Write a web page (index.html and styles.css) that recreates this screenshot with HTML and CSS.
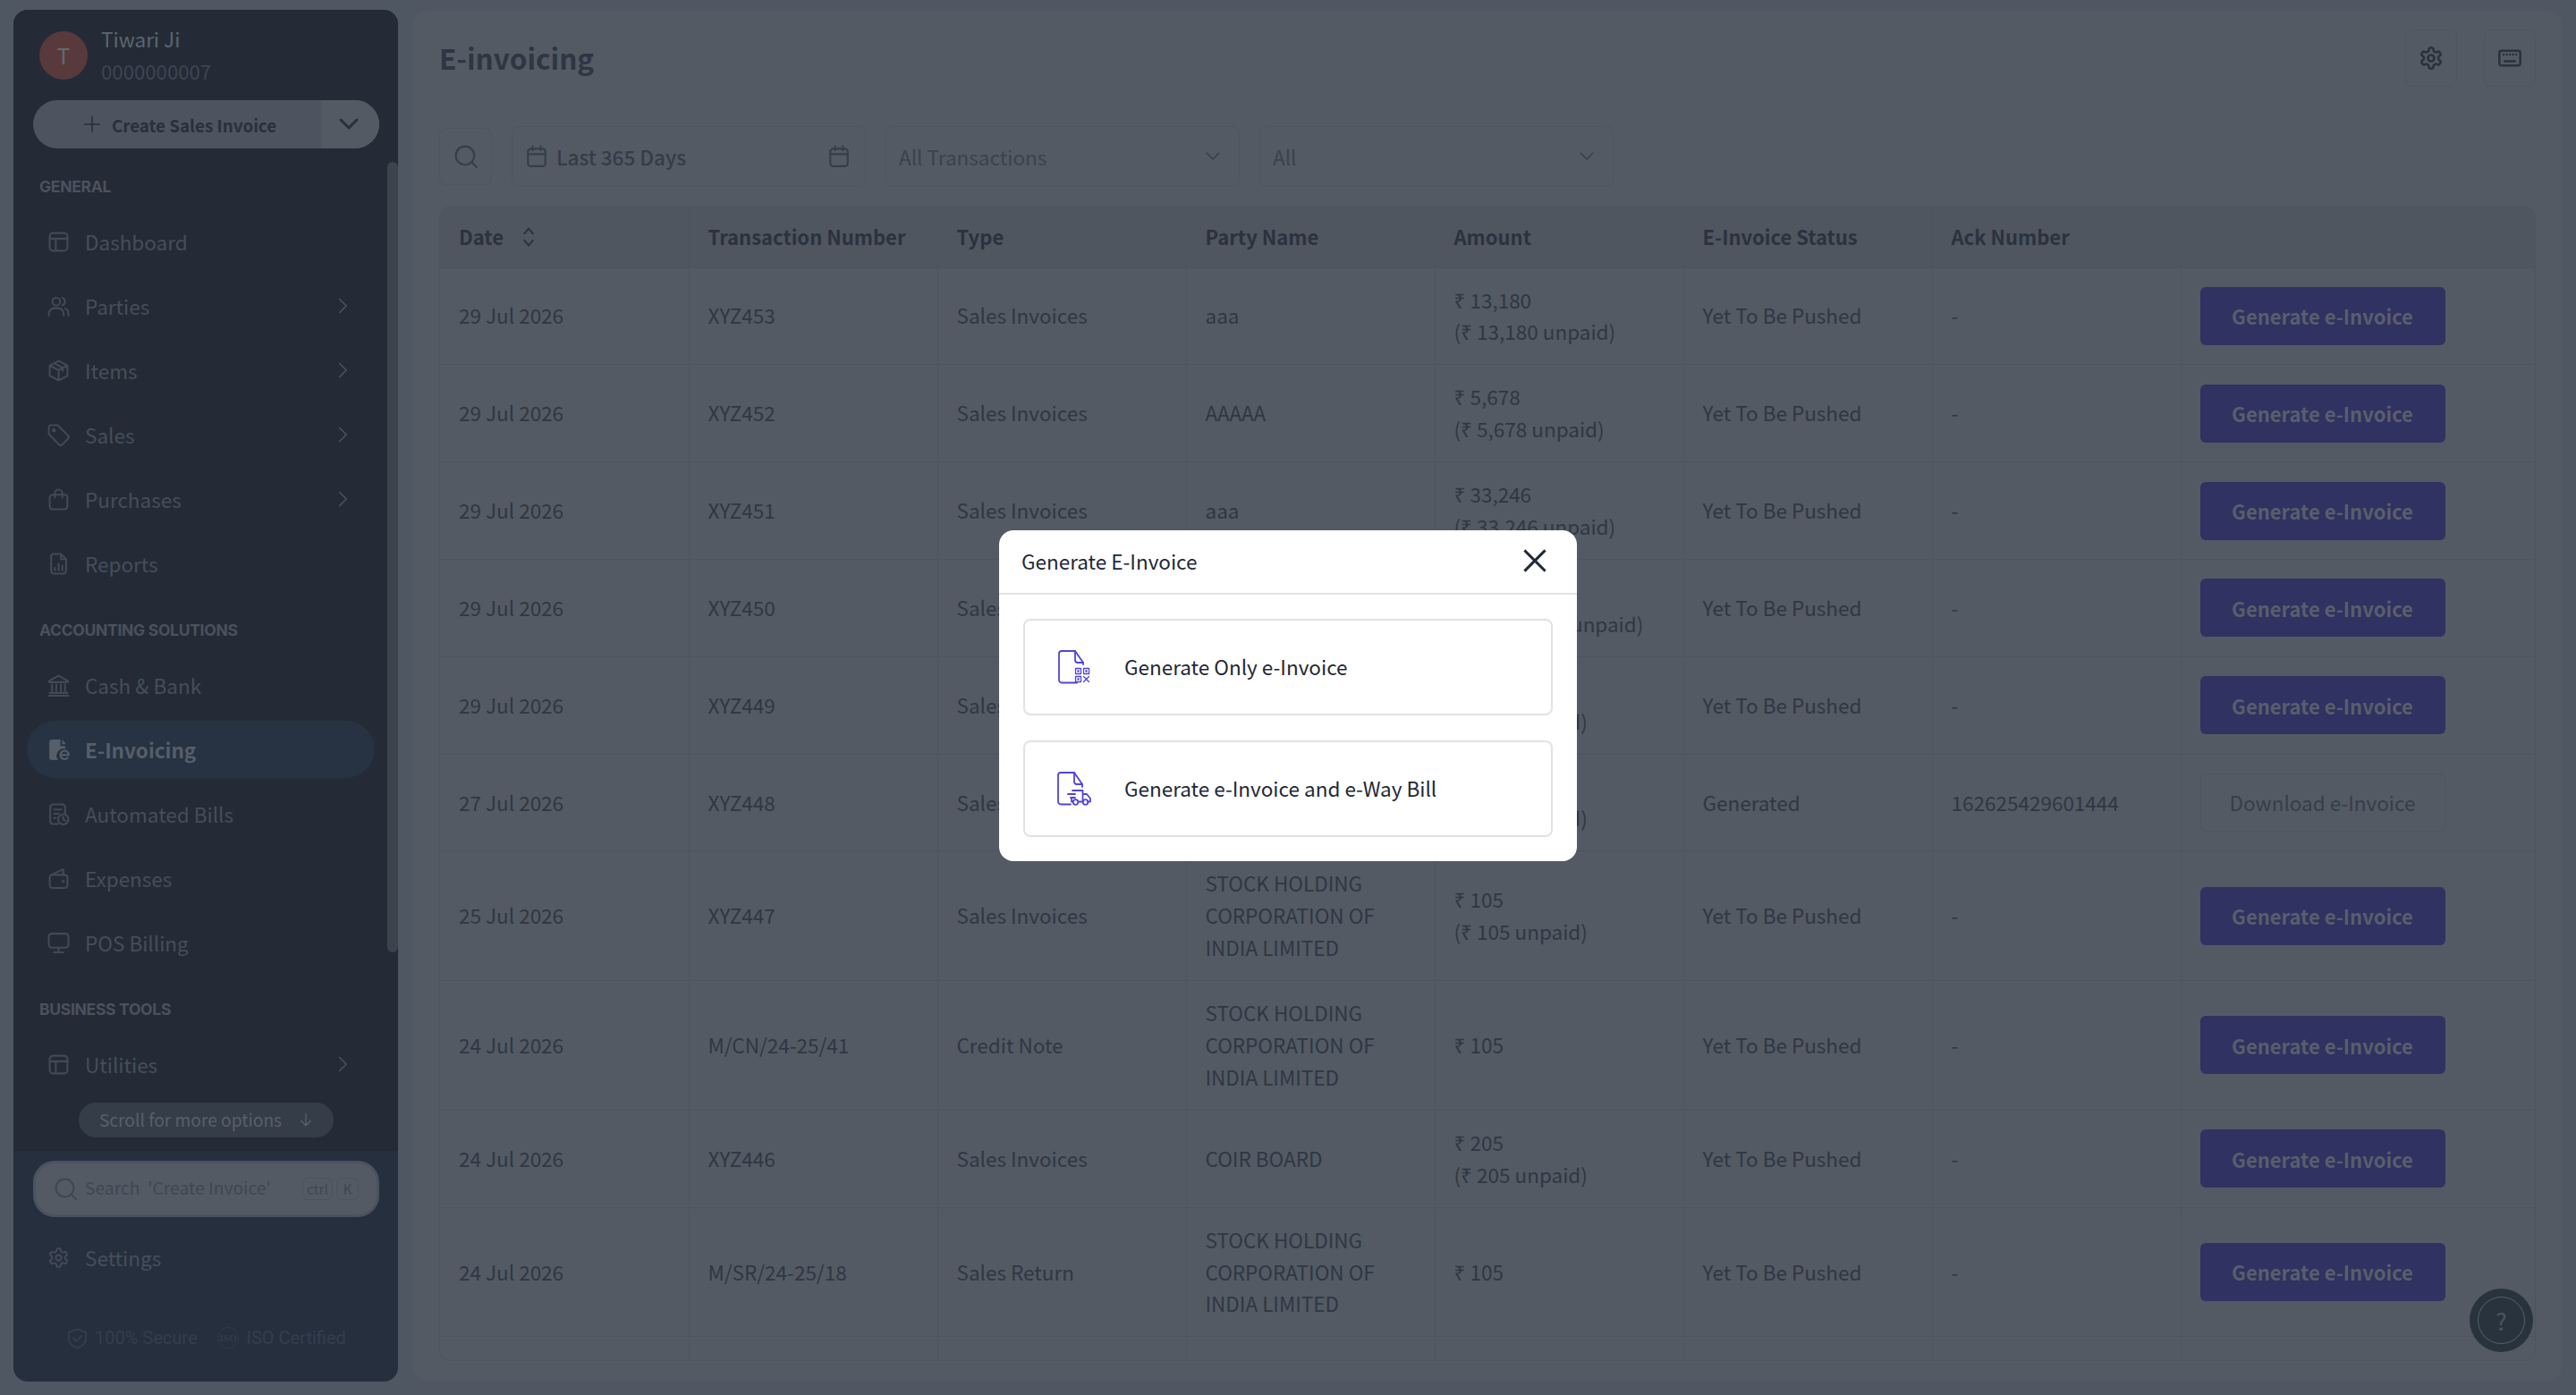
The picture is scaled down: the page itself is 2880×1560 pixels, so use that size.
FILE: index.html
```html
<!DOCTYPE html>
<html lang="en">

<head>
    <meta charset="UTF-8">
    <meta name="viewport" content="width=device-width, initial-scale=1.0">
    <title>E-invoicing</title>
    <link rel="stylesheet" href="styles.css">
</head>

<body>
    <svg class="sprite" xmlns="http://www.w3.org/2000/svg">
        <symbol id="i-layout" viewBox="0 0 24 24"><rect x="2.5" y="2.5" width="19" height="19" rx="3.5"/><path d="M2.5 8.5h19M9 8.5v13"/></symbol>
        <symbol id="i-users" viewBox="0 0 24 24"><circle cx="9.5" cy="7" r="4.2"/><path d="M1.5 22v-2a6 6 0 0 1 6-6h4a6 6 0 0 1 6 6v2M16 3a4.2 4.2 0 0 1 0 8M19 14.4a6 6 0 0 1 3.5 5.6v2"/></symbol>
        <symbol id="i-box" viewBox="0 0 24 24"><path d="M12 1.5l9.5 5v11l-9.5 5-9.5-5v-11zM2.5 6.500l9.500 5 9.500-5M12 11.500v11M7 4l9.500 5v3.500"/></symbol>
        <symbol id="i-tag" viewBox="0 0 24 24"><path d="M1.5 3.500a2 2 0 0 1 2-2h7.500l11 11a2.500 2.500 0 0 1 0 3.500l-6 6a2.500 2.500 0 0 1-3.500 0l-11-11z"/><circle cx="7" cy="7" r="1.1"/></symbol>
        <symbol id="i-bag" viewBox="0 0 24 24"><rect x="2.5" y="7" width="19" height="15.5" rx="3"/><path d="M8 10V5.500a4 4 0 0 1 8 0V10"/></symbol>
        <symbol id="i-report" viewBox="0 0 24 24"><path d="M6 1.500h8.500l5.500 5.500v12.500a3 3 0 0 1-3 3H7a3 3 0 0 1-3-3v-15a3 3 0 0 1 2-3zM14.500 1.500V7H20M8 19v-3M12 19v-7M16 19v-5"/></symbol>
        <symbol id="i-bank" viewBox="0 0 24 24"><path d="M12 1.500L2 7v1.500h20V7zM5 11v7M9.500 11v7M14.500 11v7M19 11v7M2.500 20h19M1.500 23h21"/></symbol>
        <symbol id="i-bill" viewBox="0 0 24 24"><path d="M11 22.500H6a3 3 0 0 1-3-3v-15a3 3 0 0 1 3-3h10a3 3 0 0 1 3 3v7M7 7h8M7 11.500h5M7 16h2"/><circle cx="17" cy="17.500" r="5.500"/><path d="M17 14.800v2.900l2 1.200"/></symbol>
        <symbol id="i-wallet" viewBox="0 0 24 24"><rect x="2.5" y="8" width="19" height="14" rx="3"/><path d="M4 8l13-6v6"/><circle cx="17" cy="15" r=".6"/></symbol>
        <symbol id="i-monitor" viewBox="0 0 24 24"><rect x="1.5" y="2" width="21" height="15" rx="3"/><path d="M12 17v4.500M7 22h10"/></symbol>
        <symbol id="i-gear" viewBox="0 0 24 24"><path d="M12.22 2h-.44a2 2 0 0 0-2 2v.18a2 2 0 0 1-1 1.73l-.43.25a2 2 0 0 1-2 0l-.15-.08a2 2 0 0 0-2.73.73l-.22.38a2 2 0 0 0 .73 2.73l.15.1a2 2 0 0 1 1 1.72v.51a2 2 0 0 1-1 1.74l-.15.09a2 2 0 0 0-.73 2.73l.22.38a2 2 0 0 0 2.73.73l.15-.08a2 2 0 0 1 2 0l.43.25a2 2 0 0 1 1 1.73V20a2 2 0 0 0 2 2h.44a2 2 0 0 0 2-2v-.18a2 2 0 0 1 1-1.73l.43-.25a2 2 0 0 1 2 0l.15.08a2 2 0 0 0 2.73-.73l.22-.39a2 2 0 0 0-.73-2.73l-.15-.08a2 2 0 0 1-1-1.74v-.5a2 2 0 0 1 1-1.74l.15-.09a2 2 0 0 0 .73-2.73l-.22-.38a2 2 0 0 0-2.73-.73l-.15.08a2 2 0 0 1-2 0l-.43-.25a2 2 0 0 1-1-1.73V4a2 2 0 0 0-2-2z"/><circle cx="12" cy="12" r="3"/></symbol>
        <symbol id="i-search" viewBox="0 0 24 24"><circle cx="11" cy="11" r="9.5"/><path d="M18 18l5 5"/></symbol>
        <symbol id="i-calendar" viewBox="0 0 24 24"><rect x="3" y="4" width="18" height="18" rx="3"/><path d="M3 9.500h18M8 1.500v4M16 1.500v4"/></symbol>
        <symbol id="i-right" viewBox="0 0 24 24"><path d="M8 3l9 9-9 9"/></symbol>
        <symbol id="i-down" viewBox="0 0 24 24"><path d="M3 7l9 9 9-9"/></symbol>
    </svg>

    <div class="app">
        <aside class="sidebar">
            <div class="sidebar-scroll">
                <div class="user">
                    <div class="avatar">T</div>
                    <div class="user-text">
                        <div class="user-name">Tiwari Ji</div>
                        <div class="user-phone">0000000007</div>
                    </div>
                </div>

                <div class="create-btn">
                    <div class="create-main">
                        <svg class="create-plus" viewBox="0 0 24 24"><path d="M12 2v20M2 12h20"/></svg>
                        Create Sales Invoice
                    </div>
                    <div class="create-more">
                        <svg class="create-chevron"><use href="#i-down"/></svg>
                    </div>
                </div>

                <div class="nav-label">GENERAL</div>
                <nav class="nav">
                    <a class="nav-item"><svg class="nav-icon"><use href="#i-layout"/></svg>Dashboard</a>
                    <a class="nav-item"><svg class="nav-icon"><use href="#i-users"/></svg>Parties<svg class="nav-arrow"><use href="#i-right"/></svg></a>
                    <a class="nav-item"><svg class="nav-icon"><use href="#i-box"/></svg>Items<svg class="nav-arrow"><use href="#i-right"/></svg></a>
                    <a class="nav-item"><svg class="nav-icon"><use href="#i-tag"/></svg>Sales<svg class="nav-arrow"><use href="#i-right"/></svg></a>
                    <a class="nav-item"><svg class="nav-icon"><use href="#i-bag"/></svg>Purchases<svg class="nav-arrow"><use href="#i-right"/></svg></a>
                    <a class="nav-item"><svg class="nav-icon"><use href="#i-report"/></svg>Reports</a>
                </nav>

                <div class="nav-label">ACCOUNTING SOLUTIONS</div>
                <nav class="nav">
                    <a class="nav-item"><svg class="nav-icon"><use href="#i-bank"/></svg>Cash &amp; Bank</a>
                    <a class="nav-item active">
                        <svg class="nav-icon filled" viewBox="0 0 24 24"><path d="M5 1h9v7h5v3a7.500 7.500 0 0 0-7.500 12H5a3 3 0 0 1-3-3V4a3 3 0 0 1 3-3zM16 1l4 5h-4z"/><path class="e-mark" d="M14 17.500h9a4.500 4.500 0 1 0-1.300 3.200"/></svg>
                        E-Invoicing
                    </a>
                    <a class="nav-item"><svg class="nav-icon"><use href="#i-bill"/></svg>Automated Bills</a>
                    <a class="nav-item"><svg class="nav-icon"><use href="#i-wallet"/></svg>Expenses</a>
                    <a class="nav-item"><svg class="nav-icon"><use href="#i-monitor"/></svg>POS Billing</a>
                </nav>

                <div class="nav-label">BUSINESS TOOLS</div>
                <nav class="nav">
                    <a class="nav-item"><svg class="nav-icon"><use href="#i-layout"/></svg>Utilities<svg class="nav-arrow"><use href="#i-right"/></svg></a>
                </nav>

                <div class="scroll-hint">
                    Scroll for more options
                    <svg class="scroll-arrow" viewBox="0 0 24 24"><path d="M12 2v20M4 14l8 8 8-8"/></svg>
                </div>

                <div class="scrollbar"></div>
            </div>

            <div class="sidebar-bottom">
                <div class="side-search">
                    <svg class="side-search-icon"><use href="#i-search"/></svg>
                    <span class="side-search-text">Search&nbsp; 'Create Invoice'</span>
                    <span class="kbd">ctrl</span>
                    <span class="kbd">K</span>
                </div>
                <a class="nav-item settings-item"><svg class="nav-icon"><use href="#i-gear"/></svg>Settings</a>
                <div class="trust">
                    <svg class="trust-shield" viewBox="0 0 24 24"><path d="M12 1.500l10 3.500v7c0 5.500-4 9.500-10 11.500C6 21.500 2 17.500 2 12V5zM7.500 12l3.500 3.500 6-6.500"/></svg>
                    <span>100% Secure</span>
                    <svg class="trust-iso" viewBox="0 0 26 26"><circle cx="13" cy="13" r="11.500"/><text x="13" y="16.500" text-anchor="middle">ISO</text></svg>
                    <span>ISO Certified</span>
                </div>
            </div>
        </aside>

        <main class="main">
            <header class="page-head">
                <h1 class="page-title">E-invoicing</h1>
                <div class="head-actions">
                    <div class="icon-btn"><svg class="head-icon"><use href="#i-gear"/></svg></div>
                    <div class="icon-btn">
                        <svg class="head-icon" viewBox="0 0 24 24"><rect x="2" y="5" width="20" height="14" rx="2"/><path d="M6 8.500h.01M9 8.500h.01M12 8.500h.01M15 8.500h.01M18 8.500h.01M7 15h10"/></svg>
                    </div>
                </div>
            </header>

            <div class="filters">
                <div class="filter-search"><svg class="filter-icon"><use href="#i-search"/></svg></div>
                <div class="filter date-filter">
                    <svg class="filter-icon"><use href="#i-calendar"/></svg>
                    <span class="date-text">Last 365 Days</span>
                    <svg class="filter-icon"><use href="#i-calendar"/></svg>
                </div>
                <div class="filter select-filter">All Transactions<svg class="select-chevron"><use href="#i-down"/></svg></div>
                <div class="filter select-filter">All<svg class="select-chevron"><use href="#i-down"/></svg></div>
            </div>

            <div class="table-wrap">
                <table class="table">
                    <thead>
                        <tr>
                            <th>
                                <span class="date-head">Date
                                    <svg class="sort-icon" viewBox="0 0 16 28"><path d="M2.500 9.500L8 3l5.500 6.500M2.500 18.500L8 25l5.500-6.500"/></svg>
                                </span>
                            </th>
                            <th>Transaction Number</th>
                            <th>Type</th>
                            <th>Party Name</th>
                            <th>Amount</th>
                            <th>E-Invoice Status</th>
                            <th>Ack Number</th>
                            <th></th>
                        </tr>
                    </thead>
                    <tbody>
                        <tr>
                            <td>29 Jul 2026</td>
                            <td>XYZ453</td>
                            <td>Sales Invoices</td>
                            <td>aaa</td>
                            <td>₹ 13,180<br>(₹ 13,180 unpaid)</td>
                            <td>Yet To Be Pushed</td>
                            <td>-</td>
                            <td><button class="btn-generate">Generate e-Invoice</button></td>
                        </tr>
                        <tr>
                            <td>29 Jul 2026</td>
                            <td>XYZ452</td>
                            <td>Sales Invoices</td>
                            <td>AAAAA</td>
                            <td>₹ 5,678<br>(₹ 5,678 unpaid)</td>
                            <td>Yet To Be Pushed</td>
                            <td>-</td>
                            <td><button class="btn-generate">Generate e-Invoice</button></td>
                        </tr>
                        <tr>
                            <td>29 Jul 2026</td>
                            <td>XYZ451</td>
                            <td>Sales Invoices</td>
                            <td>aaa</td>
                            <td>₹ 33,246<br>(₹ 33,246 unpaid)</td>
                            <td>Yet To Be Pushed</td>
                            <td>-</td>
                            <td><button class="btn-generate">Generate e-Invoice</button></td>
                        </tr>
                        <tr>
                            <td>29 Jul 2026</td>
                            <td>XYZ450</td>
                            <td>Sales Invoices</td>
                            <td></td>
                            <td>₹ 11,18,000<br>(₹ 11,18,000 unpaid)</td>
                            <td>Yet To Be Pushed</td>
                            <td>-</td>
                            <td><button class="btn-generate">Generate e-Invoice</button></td>
                        </tr>
                        <tr>
                            <td>29 Jul 2026</td>
                            <td>XYZ449</td>
                            <td>Sales Invoices</td>
                            <td></td>
                            <td>₹ 105<br>(₹ 105 unpaid)</td>
                            <td>Yet To Be Pushed</td>
                            <td>-</td>
                            <td><button class="btn-generate">Generate e-Invoice</button></td>
                        </tr>
                        <tr>
                            <td>27 Jul 2026</td>
                            <td>XYZ448</td>
                            <td>Sales Invoices</td>
                            <td></td>
                            <td>₹ 105<br>(₹ 105 unpaid)</td>
                            <td>Generated</td>
                            <td>162625429601444</td>
                            <td><button class="btn-download">Download e-Invoice</button></td>
                        </tr>
                        <tr>
                            <td>25 Jul 2026</td>
                            <td>XYZ447</td>
                            <td>Sales Invoices</td>
                            <td>STOCK HOLDING CORPORATION OF INDIA LIMITED</td>
                            <td>₹ 105<br>(₹ 105 unpaid)</td>
                            <td>Yet To Be Pushed</td>
                            <td>-</td>
                            <td><button class="btn-generate">Generate e-Invoice</button></td>
                        </tr>
                        <tr>
                            <td>24 Jul 2026</td>
                            <td>M/CN/24-25/41</td>
                            <td>Credit Note</td>
                            <td>STOCK HOLDING CORPORATION OF INDIA LIMITED</td>
                            <td>₹ 105</td>
                            <td>Yet To Be Pushed</td>
                            <td>-</td>
                            <td><button class="btn-generate">Generate e-Invoice</button></td>
                        </tr>
                        <tr>
                            <td>24 Jul 2026</td>
                            <td>XYZ446</td>
                            <td>Sales Invoices</td>
                            <td>COIR BOARD</td>
                            <td>₹ 205<br>(₹ 205 unpaid)</td>
                            <td>Yet To Be Pushed</td>
                            <td>-</td>
                            <td><button class="btn-generate">Generate e-Invoice</button></td>
                        </tr>
                        <tr>
                            <td>24 Jul 2026</td>
                            <td>M/SR/24-25/18</td>
                            <td>Sales Return</td>
                            <td>STOCK HOLDING CORPORATION OF INDIA LIMITED</td>
                            <td>₹ 105</td>
                            <td>Yet To Be Pushed</td>
                            <td>-</td>
                            <td><button class="btn-generate">Generate e-Invoice</button></td>
                        </tr>
                        <tr class="row-cut">
                            <td></td><td></td><td></td><td></td><td></td><td></td><td></td><td></td>
                        </tr>
                    </tbody>
                </table>
            </div>
        </main>
    </div>

    <div class="help-btn">
        <div class="help-ring">?</div>
    </div>

    <div class="backdrop">
        <div class="modal">
            <div class="modal-head">
                <span>Generate E-Invoice</span>
                <svg class="modal-close" viewBox="0 0 24 24"><path d="M3 3l18 18M21 3L3 21"/></svg>
            </div>
            <div class="modal-body">
                <div class="option">
                    <svg class="option-icon" viewBox="0 0 36 38">
                        <path d="M21 36.500H4a3 3 0 0 1-3-3V4a3 3 0 0 1 3-3h15l9 13v2"/>
                        <path d="M19 1v10a3 3 0 0 0 3 3h6"/>
                        <path class="qr" d="M19.500 20.500h6v6h-6zM28.500 20.500h6v6h-6zM19.500 29.500h6v6h-6zM22 23h1v1h-1zM31 23h1v1h-1zM22 32h1v1h-1zM28.500 29.500l6 6M34.500 29.500l-6 6"/>
                    </svg>
                    <span class="option-text">Generate Only e-Invoice</span>
                </div>
                <div class="option">
                    <svg class="option-icon" viewBox="0 0 38 38">
                        <path d="M15 36.500H4a3 3 0 0 1-3-3V4a3 3 0 0 1 3-3h15l9 13v3"/>
                        <path d="M19 1v10a3 3 0 0 0 3 3h6"/>
                        <path d="M17 21h11.500v12.500H24M12 25h8M15 29h5M28.500 25h4.500l4 5v3.500h-2.500M17 33.500h-1v-3M28.500 33.500h-.5"/>
                        <circle cx="20.500" cy="34" r="2.800"/>
                        <circle cx="31.500" cy="34" r="2.800"/>
                    </svg>
                    <span class="option-text">Generate e-Invoice and e-Way Bill</span>
                </div>
            </div>
        </div>
    </div>
</body>

</html>
```

FILE: styles.css
```css
* {
    box-sizing: border-box;
}

body {
    margin: 0;
    height: 1560px;
    overflow: hidden;
    background-color: #4f5762;
    font-family: "Noto Sans CJK SC", "Noto Sans", sans-serif;
    font-size: 22.5px;
    color: #2f3744;
}

.sprite {
    display: none;
}

svg {
    fill: none;
    stroke: currentColor;
    stroke-width: 2;
    stroke-linecap: round;
    stroke-linejoin: round;
    flex-shrink: 0;
}

.app {
    display: flex;
    gap: 17px;
    height: 1560px;
    padding: 11px 16px 15px 15px;
}

/* sidebar */

.sidebar {
    display: flex;
    flex-direction: column;
    width: 430px;
    flex-shrink: 0;
    border-radius: 16px;
    overflow: hidden;
    background-color: #262f3e;
}

.sidebar-scroll {
    position: relative;
    height: 1276px;
    padding-top: 24px;
    background-color: #242b36;
}

.user {
    display: flex;
    align-items: center;
    gap: 15px;
    height: 54px;
    margin-left: 29px;
}

.avatar {
    display: flex;
    align-items: center;
    justify-content: center;
    width: 54px;
    height: 54px;
    border-radius: 50%;
    background-color: #583a3c;
    color: #616a72;
    font-size: 24px;
    line-height: 1;
}

.user-text {
    padding-bottom: 2px;
}

.user-name {
    font-size: 22.5px;
    line-height: 36px;
    color: #5d6570;
}

.user-phone {
    font-size: 22.2px;
    line-height: 36px;
    color: #3c4553;
}

.create-btn {
    display: flex;
    width: 387px;
    height: 54px;
    margin: 23px 0 0 22px;
    border-radius: 27px;
    overflow: hidden;
    background-color: #4d5460;
    color: #29303b;
}

.create-main {
    display: flex;
    align-items: center;
    justify-content: center;
    gap: 12px;
    width: 322px;
    padding-left: 6px;
    font-size: 18.8px;
    font-weight: 700;
}

.create-plus {
    width: 20px;
    height: 20px;
}

.create-more {
    display: flex;
    align-items: center;
    justify-content: center;
    flex: 1;
    padding-right: 4px;
    background-color: #535a64;
}

.create-chevron {
    width: 24px;
    height: 24px;
    stroke-width: 3;
}

.nav-label {
    height: 24px;
    margin: 31px 0 17px 29px;
    font-family: Inter, "Liberation Sans", sans-serif;
    font-size: 17.5px;
    font-weight: 700;
    line-height: 24px;
    letter-spacing: -0.3px;
    color: #4a525e;
}

.nav {
    display: flex;
    flex-direction: column;
    gap: 8px;
    width: 389px;
    margin-left: 15px;
}

.nav-item {
    display: flex;
    align-items: center;
    gap: 17px;
    height: 64px;
    padding: 0 26px 0 23px;
    border-radius: 32px;
    font-size: 22.5px;
    color: #464e5b;
}

.nav-item.active {
    background-color: #273243;
    color: #565e69;
    font-weight: 700;
}

.nav-icon {
    width: 25px;
    height: 25px;
    stroke: #424a57;
}

.nav-item.active .nav-icon {
    stroke: none;
    fill: #565e69;
}

.nav-item.active .e-mark {
    fill: none;
    stroke: #565e69;
    stroke-width: 2;
}

.nav-arrow {
    width: 20px;
    height: 20px;
    margin-left: auto;
    color: #4a525e;
}

.scroll-hint {
    display: flex;
    align-items: center;
    justify-content: center;
    gap: 19px;
    width: 285px;
    height: 39px;
    margin: 11px 0 0 73px;
    padding-bottom: 2px;
    border-radius: 20px;
    background-color: #353d49;
    font-size: 19.2px;
    color: #57606b;
}

.scroll-arrow {
    width: 16px;
    height: 18px;
    color: #57606b;
}

.scrollbar {
    position: absolute;
    top: 170px;
    right: 0;
    width: 12px;
    height: 884px;
    border-radius: 6px;
    background-color: #3b434d;
}

.sidebar-bottom {
    flex: 1;
    padding-top: 11px;
}

.side-search {
    display: flex;
    align-items: center;
    width: 387px;
    height: 63px;
    margin-left: 22px;
    padding: 0 20px 0 21px;
    border: 3px solid #4a5262;
    border-radius: 24px;
    background-color: #535a63;
}

.side-search-icon {
    width: 25px;
    height: 25px;
    color: #3f4755;
}

.side-search-text {
    flex: 1;
    margin-left: 9px;
    padding-bottom: 3px;
    font-size: 19.3px;
    color: #3f4755;
}

.kbd {
    display: flex;
    align-items: center;
    justify-content: center;
    min-width: 25px;
    height: 25px;
    margin-left: 4px;
    padding: 0 4px 2px;
    border: 1px solid #4a5260;
    border-radius: 6px;
    font-size: 15.5px;
    color: #3f4755;
}

.settings-item {
    width: 389px;
    margin: 13px 0 0 15px;
}

.trust {
    display: flex;
    align-items: center;
    margin: 45px 0 0 60px;
    font-family: Roboto, sans-serif;
    font-size: 20px;
    color: #343e4c;
}

.trust-shield {
    width: 23px;
    height: 25px;
    margin-right: 8px;
}

.trust-iso {
    width: 26px;
    height: 26px;
    margin: 0 8px 0 21px;
    stroke-width: 1;
    stroke-dasharray: 2 2;
}

.trust-iso text {
    fill: currentColor;
    stroke: none;
    font-family: "Liberation Serif", serif;
    font-size: 11px;
    font-weight: 700;
}

/* main panel */

.main {
    display: flex;
    flex-direction: column;
    flex: 1;
    min-width: 0;
    padding: 22px 29px 23px;
    border-radius: 16px;
    background-color: #535a63;
}

.page-head {
    display: flex;
    align-items: center;
    justify-content: space-between;
    height: 64px;
}

.page-title {
    margin: 0 0 2px;
    font-size: 31.5px;
    font-weight: 700;
    color: #2e3643;
}

.head-actions {
    display: flex;
    gap: 30px;
}

.icon-btn {
    display: flex;
    align-items: center;
    justify-content: center;
    width: 58px;
    height: 64px;
    border: 1px solid #4e5560;
    border-radius: 8px;
}

.head-icon {
    width: 28px;
    height: 28px;
    color: #2a323e;
    stroke-width: 2.2;
}

.filters {
    display: flex;
    align-items: center;
    gap: 22px;
    margin-top: 44px;
}

.filter-search {
    display: flex;
    align-items: center;
    justify-content: center;
    width: 59px;
    height: 64px;
    border: 1px solid #4e5560;
    border-radius: 8px;
}

.filter {
    display: flex;
    align-items: center;
    width: 396px;
    height: 68px;
    padding: 0 16px 0 14px;
    border: 1px solid #4e5560;
    border-radius: 8px;
    color: #3a4250;
}

.filter-icon {
    width: 26px;
    height: 26px;
    color: #363e4b;
}

.date-text {
    flex: 1;
    margin-left: 9px;
    font-weight: 500;
    color: #343c49;
}

.select-chevron {
    width: 18px;
    height: 18px;
    margin-left: auto;
    margin-right: 4px;
    color: #363e4b;
}

.table-wrap {
    height: 1291px;
    margin-top: 22px;
    overflow: hidden;
    border: 1px solid #4c5460;
    border-radius: 12px;
}

.table {
    width: 100%;
    table-layout: fixed;
    border-collapse: collapse;
}

.table th,
.table td {
    padding: 18px 22px 18px 21px;
    border-right: 1px solid #4c5460;
    border-bottom: 1px solid #4c5460;
    line-height: 35.9px;
    text-align: left;
    vertical-align: middle;
    font-weight: 400;
}

.table th:last-child,
.table td:last-child {
    width: 396px;
    border-right: 0;
}

.table th {
    height: 67px;
    padding-top: 0;
    padding-bottom: 0;
    background-color: #4f5660;
    color: #2b323e;
    font-size: 22px;
    font-weight: 700;
}

.date-head {
    display: flex;
    align-items: center;
    gap: 21px;
}

.sort-icon {
    width: 14px;
    height: 24px;
    stroke-width: 2.4;
    color: #2b323e;
}

.btn-generate,
.btn-download {
    display: block;
    width: 274px;
    height: 65px;
    padding: 0;
    border-radius: 6px;
    font-family: inherit;
    font-size: 22px;
}

.btn-generate {
    border: 0;
    background-color: #303261;
    color: #585f6b;
    font-weight: 700;
}

.btn-download {
    border: 1px solid #4e5560;
    background: none;
    color: #363e4b;
    font-size: 22.5px;
}

.row-cut td {
    height: 109px;
}

/* help and modal */

.help-btn {
    position: absolute;
    left: 2761px;
    top: 1441px;
    display: flex;
    align-items: center;
    justify-content: center;
    width: 71px;
    height: 71px;
    border-radius: 50%;
    background-color: #29333d;
}

.help-ring {
    display: flex;
    align-items: center;
    justify-content: center;
    width: 53px;
    height: 53px;
    border: 1px solid #59626c;
    border-radius: 50%;
    font-size: 26px;
    color: #4c5660;
}

.backdrop {
    position: fixed;
    inset: 0;
    display: flex;
    align-items: center;
    justify-content: center;
    padding-bottom: 4px;
}

.modal {
    width: 646px;
    height: 370px;
    border-radius: 16px;
    background-color: #fff;
    color: #1f2937;
}

.modal-head {
    display: flex;
    align-items: center;
    justify-content: space-between;
    height: 72px;
    padding: 0 33px 2px 25px;
    border-bottom: 2px solid #e2e2e2;
}

.modal-close {
    width: 28px;
    height: 28px;
    stroke-width: 2.6;
    stroke-linecap: square;
    color: #1f2937;
}

.modal-body {
    display: flex;
    flex-direction: column;
    gap: 28px;
    padding: 27px 27px 0;
}

.option {
    display: flex;
    align-items: center;
    gap: 37px;
    height: 108px;
    padding-left: 36px;
    border: 2px solid #e2e2e2;
    border-radius: 8px;
}

.option-text {
    padding-bottom: 3px;
}

.option-icon {
    width: 38px;
    height: 38px;
    color: #4f46d6;
    stroke-width: 1.8;
}

.option-icon .qr {
    stroke-width: 1.3;
}
```
